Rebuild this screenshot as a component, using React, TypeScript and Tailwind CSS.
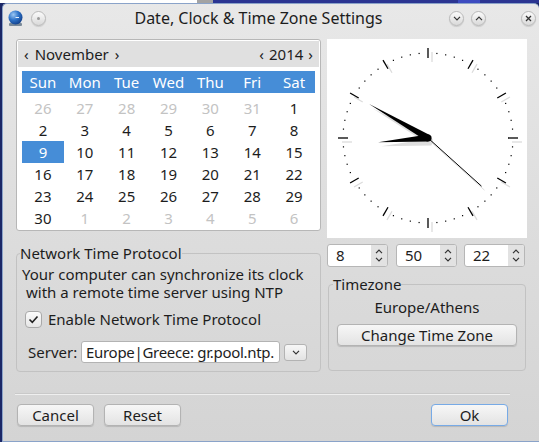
import type { ReactNode } from "react";

const dayNames = ["Sun", "Mon", "Tue", "Wed", "Thu", "Fri", "Sat"];

// November 2014, padded with the tail of October and head of December
const cells: { n: number; other: boolean }[] = [
  ...[26, 27, 28, 29, 30, 31].map((n) => ({ n, other: true })),
  ...Array.from({ length: 30 }, (_, i) => ({ n: i + 1, other: false })),
  ...[1, 2, 3, 4, 5, 6].map((n) => ({ n, other: true })),
];

function Chevron({ dir, className = "" }: { dir: "up" | "down"; className?: string }) {
  return (
    <svg width="8" height="5" viewBox="0 0 8 5" className={className}>
      <path
        d={dir === "up" ? "M1 4.2 L4 1.2 L7 4.2" : "M1 0.8 L4 3.8 L7 0.8"}
        fill="none"
        stroke="#333"
        strokeWidth="1.2"
      />
    </svg>
  );
}

function TitleCircle({ children }: { children?: ReactNode }) {
  return (
    <span className="w-[15px] h-[15px] rounded-full border border-[#b9b9b9] bg-gradient-to-b from-[#fbfbfb] to-[#d9d9d9] flex items-center justify-center shadow-[0_1px_1px_rgba(0,0,0,0.12)]">
      {children}
    </span>
  );
}

function Btn({ children, className = "" }: { children: ReactNode; className?: string }) {
  return (
    <button
      type="button"
      className={`h-[22px] rounded-[4px] border bg-gradient-to-b from-[#f7f7f7] to-[#e3e3e3] shadow-[0_1px_1px_rgba(0,0,0,0.14)] text-[15px] leading-none text-[#1d1d1d] flex items-center justify-center ${className}`}
    >
      {children}
    </button>
  );
}

function Spin({ value }: { value: string }) {
  return (
    <div className="w-[61px] h-[23px] flex border border-[#b6b6b6] rounded-[3px] bg-white overflow-hidden">
      <span className="flex-1 pl-[8px] text-[15px] leading-[21px] text-[#1d1d1d]">{value}</span>
      <span className="w-[16px] bg-[#e2e2e2] flex flex-col items-center justify-center gap-[3px]">
        <Chevron dir="up" />
        <Chevron dir="down" />
      </span>
    </div>
  );
}

function Clock() {
  const cx = 101;
  const cy = 99;
  const pt = (deg: number, r: number, ox = 0, oy = 0) => {
    const a = (deg * Math.PI) / 180;
    return [cx + ox + Math.sin(a) * r, cy + oy - Math.cos(a) * r];
  };
  const hand = (deg: number, len: number, w: number, ox = 0, oy = 0) => {
    const [tx, ty] = pt(deg, len, ox, oy);
    const [ax, ay] = pt(deg + 90, w, ox, oy);
    const [bx, by] = pt(deg - 90, w, ox, oy);
    const [ex, ey] = pt(deg + 180, 2, ox, oy);
    return `${tx},${ty} ${ax},${ay} ${ex},${ey} ${bx},${by}`;
  };
  const ticks = Array.from({ length: 12 }, (_, i) => i * 30);
  const dots = Array.from({ length: 60 }, (_, i) => i * 6).filter((d) => d % 30 !== 0);

  return (
    <svg width="200" height="199" viewBox="0 0 200 199">
      <rect width="200" height="199" fill="#fff" />
      {ticks.map((d) => {
        const [x1, y1] = pt(d, 80, 4, 4);
        const [x2, y2] = pt(d, 90, 4, 4);
        return <line key={`s${d}`} x1={x1} y1={y1} x2={x2} y2={y2} stroke="#dcdcdc" strokeWidth="1.3" />;
      })}
      {ticks.map((d) => {
        const [x1, y1] = pt(d, 80);
        const [x2, y2] = pt(d, 90);
        return <line key={d} x1={x1} y1={y1} x2={x2} y2={y2} stroke="#000" strokeWidth="1.3" />;
      })}
      {dots.map((d) => {
        const [x, y] = pt(d, 85);
        return <rect key={d} x={x - 0.6} y={y - 0.6} width="1.2" height="1.2" fill="#000" />;
      })}
      {/* hand shadows */}
      <polygon points={hand(265, 50, 3.4, 3, 4)} fill="#dedede" />
      <polygon points={hand(300, 68, 3.4, 3, 4)} fill="#dedede" />
      <line x1={cx + 3} y1={cy + 4} x2={pt(132, 72, 3, 4)[0]} y2={pt(132, 72, 3, 4)[1]} stroke="#dedede" strokeWidth="1" />
      {/* hands */}
      <polygon points={hand(265, 50, 3.4)} fill="#000" />
      <polygon points={hand(300, 68, 3.4)} fill="#000" />
      <line x1={cx} y1={cy} x2={pt(132, 72)[0]} y2={pt(132, 72)[1]} stroke="#000" strokeWidth="1" />
      <circle cx={cx} cy={cy} r="3.6" fill="#000" />
    </svg>
  );
}

export default function App() {
  return (
    <div className="w-[539px] h-[442px] overflow-hidden flex flex-col bg-[#1b2766] font-['Noto_Sans',sans-serif] text-[#1d1d1d]">
      {/* desktop strip behind the window */}
      <div className="h-[3px] flex shrink-0">
        <div className="w-[197px] bg-white" />
        <div className="w-[16px] bg-[#a3a3a3]" />
        <div className="w-[245px] bg-[#2b3592]" />
        <div className="w-[22px] bg-[#3c4bc0]" />
        <div className="flex-1 bg-[#2b3592]" />
      </div>

      <div className="flex-1 flex min-h-0">
        <div className="w-[2px] bg-[#1b2766]" />
        <div className="flex-1 flex flex-col border border-r-0 border-[#8aa3c9] rounded-t-[5px] bg-gradient-to-b from-[#e8e8e8] via-[#dddddd] to-[#d4d4d4]">
          {/* title bar */}
          <div className="h-[29px] flex items-center shrink-0 pl-[4px] pr-[3px]">
            <svg width="17" height="17" viewBox="0 0 17 17">
              <defs>
                <radialGradient id="g" cx="0.35" cy="0.3" r="0.75">
                  <stop offset="0" stopColor="#9cc8f4" />
                  <stop offset="0.5" stopColor="#2f74c9" />
                  <stop offset="1" stopColor="#123f8a" />
                </radialGradient>
              </defs>
              <rect x="2" y="13" width="13" height="3" rx="1" fill="#7a8a99" />
              <circle cx="8.5" cy="7.5" r="7" fill="url(#g)" />
              <path d="M8.5 7.5 L12 7.5" stroke="#e8f2ff" strokeWidth="1" />
            </svg>
            <span className="ml-[7px]">
              <TitleCircle>
                <span className="w-[3px] h-[3px] rounded-full bg-[#9a9a9a]" />
              </TitleCircle>
            </span>
            <span className="flex-1 text-center pl-[22px] text-[16px] leading-none text-[#1d1d1d] -mt-[1px]">
              Date, Clock &amp; Time Zone Settings
            </span>
            <span className="flex gap-[7px]">
              <TitleCircle>
                <Chevron dir="down" />
              </TitleCircle>
              <TitleCircle>
                <Chevron dir="up" />
              </TitleCircle>
            </span>
            <span className="ml-[35px]">
              <TitleCircle>
                <svg width="7" height="7" viewBox="0 0 7 7">
                  <path d="M1 1 L6 6 M6 1 L1 6" stroke="#333" strokeWidth="1.3" />
                </svg>
              </TitleCircle>
            </span>
          </div>

          {/* main area */}
          <div className="flex gap-[6px] pl-[13px] pt-[6px]">
            {/* left column */}
            <div className="w-[305px] flex flex-col">
              <div className="h-[192px] border border-[#b7b7b7] rounded-[3px] bg-white p-[1px]">
                <div className="h-[26px] bg-[#e0e0e0] flex items-center justify-between px-[6px] text-[15px] leading-none">
                  <span className="flex items-center gap-[6px]">
                    <span>‹</span>
                    <span>November</span>
                    <span>›</span>
                  </span>
                  <span className="flex items-center gap-[5px]">
                    <span>‹</span>
                    <span>2014</span>
                    <span>›</span>
                  </span>
                </div>
                <div className="mx-[4px] mt-[4px] w-[293px]">
                  <div className="grid grid-cols-7 h-[22px] bg-[#468dd7] text-white text-[15px] leading-[22px] text-center">
                    {dayNames.map((d) => (
                      <span key={d}>{d}</span>
                    ))}
                  </div>
                  <div className="grid grid-cols-7 mt-[4px] text-[15px] leading-[22px] text-center">
                    {cells.map((c, i) => (
                      <span
                        key={i}
                        className={
                          c.other
                            ? "h-[22px] text-[#c3c3c3]"
                            : c.n === 9
                            ? "h-[22px] bg-[#468dd7] text-white"
                            : "h-[22px] text-[#1d1d1d]"
                        }
                      >
                        {c.n}
                      </span>
                    ))}
                  </div>
                </div>
              </div>

              <fieldset className="mt-[13px] h-[128px] border border-[#c2c2c2] rounded-[4px] px-0">
                <legend className="ml-[3px] px-0 text-[15px] leading-[18px]">Network Time Protocol</legend>
                <div className="mt-[3px] pl-[5px] h-[18px] text-[15px] leading-[18px] whitespace-nowrap">
                  Your computer can synchronize its clock
                </div>
                <div className="pl-[9px] h-[18px] text-[15px] leading-[18px] whitespace-nowrap">
                  with a remote time server using NTP
                </div>
                <div className="mt-[10px] pl-[8px] flex items-center gap-[6px]">
                  <span className="w-[17px] h-[17px] rounded-[4px] border border-[#a9a9a9] bg-gradient-to-b from-[#fbfbfb] to-[#e6e6e6] flex items-center justify-center">
                    <svg width="11" height="9" viewBox="0 0 11 9">
                      <path d="M1.5 4.5 L4.3 7.3 L9.5 1.5" fill="none" stroke="#222" strokeWidth="1.6" />
                    </svg>
                  </span>
                  <span className="text-[15px] leading-none">Enable Network Time Protocol</span>
                </div>
                <div className="mt-[13px] pl-[11px] flex items-center">
                  <span className="w-[53px] text-[15px] leading-none">Server:</span>
                  <span className="w-[199px] h-[22px] border border-[#b3b3b3] rounded-[3px] bg-white overflow-hidden pl-[4px] text-[15px] leading-[20px] tracking-[-0.3px] whitespace-nowrap">
                    Europe|Greece: gr.pool.ntp.
                  </span>
                  <span className="ml-[4px] w-[23px] h-[17px] rounded-[3px] border border-[#b3b3b3] bg-gradient-to-b from-[#f7f7f7] to-[#e3e3e3] flex items-center justify-center">
                    <Chevron dir="down" />
                  </span>
                </div>
              </fieldset>
            </div>

            {/* right column */}
            <div className="w-[200px] flex flex-col">
              <Clock />
              <div className="mt-[6px] flex">
                <Spin value="8" />
                <span className="ml-[8px]">
                  <Spin value="50" />
                </span>
                <span className="ml-[7px]">
                  <Spin value="22" />
                </span>
              </div>
              <fieldset className="mt-[8px] ml-[1px] w-[198px] h-[96px] border border-[#c2c2c2] rounded-[4px] px-0">
                <legend className="ml-[4px] px-0 text-[15px] leading-[18px]">Timezone</legend>
                <p className="mt-[5px] text-center text-[15px] leading-[18px]">Europe/Athens</p>
                <Btn className="mt-[8px] mx-[8px] w-[180px] border-[#b3b3b3]">Change Time Zone</Btn>
              </fieldset>
            </div>
          </div>

          {/* separator and buttons */}
          <div className="ml-[12px] mt-[22px] w-[495px] h-px bg-[#efefef] shadow-[0_-1px_0_#c9c9c9]" />
          <div className="ml-[14px] mt-[9px] w-[491px] flex">
            <Btn className="w-[77px] border-[#b3b3b3]">Cancel</Btn>
            <Btn className="ml-[10px] w-[77px] border-[#b3b3b3]">Reset</Btn>
            <Btn className="ml-auto w-[77px] border-[#77aae6] shadow-[0_0_0_1px_#b5d3f3]">Ok</Btn>
          </div>
        </div>
      </div>
    </div>
  );
}
